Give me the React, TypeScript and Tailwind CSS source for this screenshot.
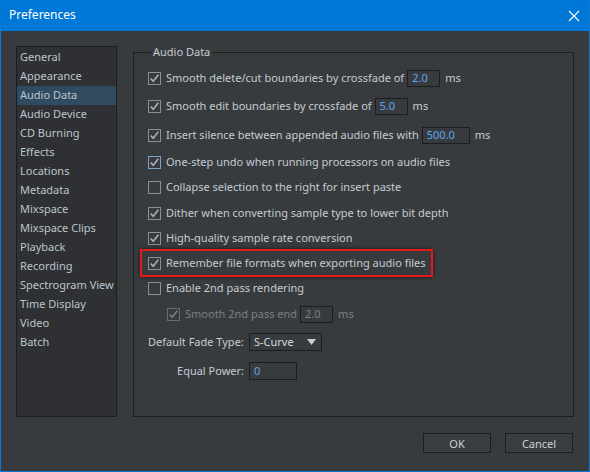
import React from "react";

const FONT = { fontFamily: '"Noto Sans", "Open Sans", sans-serif' };

const sections = [
  "General",
  "Appearance",
  "Audio Data",
  "Audio Device",
  "CD Burning",
  "Effects",
  "Locations",
  "Metadata",
  "Mixspace",
  "Mixspace Clips",
  "Playback",
  "Recording",
  "Spectrogram View",
  "Time Display",
  "Video",
  "Batch",
];

function Check({ checked, focused, disabled }: { checked: boolean; focused?: boolean; disabled?: boolean }) {
  const border = focused ? "border-[#7aa3cc]" : disabled ? "border-[#6a6e72]" : "border-[#8b8f93]";
  return (
    <span className={`w-[13px] h-[13px] shrink-0 border ${border} flex items-center justify-center`}>
      {checked && (
        <svg width="11" height="11" viewBox="0 0 11 11" aria-hidden="true">
          <path
            d="M1.8 5.6 L4.3 8.3 L9.3 1.8"
            fill="none"
            stroke={disabled ? "#7b7f83" : "#a9aeb3"}
            strokeWidth="1.6"
          />
        </svg>
      )}
    </span>
  );
}

function Field({ value, width, disabled }: { value: string; width: string; disabled?: boolean }) {
  return (
    <span
      className={`${width} h-[17px] border border-[#1c1d1f] flex items-center pl-[4px] ${
        disabled ? "text-[#7b8085]" : "text-[#5ea6ec]"
      }`}
    >
      {value}
    </span>
  );
}

function Row({
  h,
  checked,
  label,
  focused,
  children,
}: {
  h: string;
  checked: boolean;
  label: string;
  focused?: boolean;
  children?: React.ReactNode;
}) {
  return (
    <div className={`${h} flex items-center whitespace-nowrap`}>
      <Check checked={checked} focused={focused} />
      <span className="ml-[5px]">{label}</span>
      {children}
    </div>
  );
}

export default function App() {
  return (
    <div
      className="w-[590px] h-[472px] bg-[#383b3e] border border-t-0 border-[#0a78d7] flex flex-col text-[11px] text-[#c3ccd2] overflow-hidden"
      style={FONT}
    >
      {/* title bar */}
      <div className="h-[31px] -mx-px bg-[#0078d7] flex items-center justify-between pl-[9px] pr-[10px] shrink-0">
        <span className="text-white text-[12px] mb-[1px]">Preferences</span>
        <svg width="12" height="12" viewBox="0 0 12 12" aria-hidden="true">
          <path d="M1 1 L11 11 M11 1 L1 11" stroke="white" strokeWidth="1.1" />
        </svg>
      </div>

      <div className="flex-1 flex flex-col">
        <div className="flex pt-[15px] pl-[15px]">
          {/* sidebar */}
          <div className="w-[101px] h-[371px] bg-[#2e3033] border border-[#1c1d1f] text-[#bcc5cc] pt-px">
            {sections.map((s) => (
              <div
                key={s}
                className={`h-[19px] flex items-center pl-[3px] whitespace-nowrap ${
                  s === "Audio Data" ? "bg-[#304a60]" : ""
                }`}
              >
                {s}
              </div>
            ))}
          </div>

          {/* group box */}
          <div className="relative ml-[16px] mt-[6px] w-[441px] h-[365px] border border-[#1c1d1f] pl-[14px] pt-[11px]">
            <span className="absolute left-[17px] -top-[9px] px-[2px] bg-[#383b3e] leading-[16px]">
              Audio Data
            </span>

            <Row h="h-[28px]" checked label="Smooth delete/cut boundaries by crossfade of">
              <span className="ml-[3px]"><Field value="2.0" width="w-[33px]" /></span>
              <span className="ml-[5px]">ms</span>
            </Row>
            <Row h="h-[29px]" checked label="Smooth edit boundaries by crossfade of">
              <span className="ml-[3px]"><Field value="5.0" width="w-[33px]" /></span>
              <span className="ml-[5px]">ms</span>
            </Row>
            <Row h="h-[29px]" checked label="Insert silence between appended audio files with">
              <span className="ml-[3px]"><Field value="500.0" width="w-[48px]" /></span>
              <span className="ml-[5px]">ms</span>
            </Row>
            <Row h="h-[25px]" checked focused label="One-step undo when running processors on audio files" />
            <Row h="h-[25px]" checked={false} label="Collapse selection to the right for insert paste" />
            <Row h="h-[26px]" checked label="Dither when converting sample type to lower bit depth" />
            <Row h="h-[25px]" checked label="High-quality sample rate conversion" />
            <div className="h-[25px] flex items-center relative whitespace-nowrap">
              <span className="absolute -left-[8px] top-[-2px] w-[293px] h-[28px] border-2 border-[#e81818] shadow-[0_0_4px_rgba(0,0,0,0.6)]" />
              <Check checked />
              <span className="ml-[5px]">Remember file formats when exporting audio files</span>
            </div>
            <Row h="h-[25px]" checked={false} label="Enable 2nd pass rendering" />
            <div className="h-[26px] flex items-center pl-[19px] text-[#7b8085] whitespace-nowrap">
              <Check checked disabled />
              <span className="ml-[5px]">Smooth 2nd pass end</span>
              <span className="ml-[3px]"><Field value="2.0" width="w-[33px]" disabled /></span>
              <span className="ml-[5px]">ms</span>
            </div>

            <div className="h-[30px] flex items-center whitespace-nowrap">
              <span className="w-[101px]">Default Fade Type:</span>
              <span className="w-[73px] h-[18px] border border-[#1c1d1f] flex items-center justify-between pl-[4px] pr-[5px] text-[#d3d9de]">
                S-Curve
                <svg width="9" height="6" viewBox="0 0 9 6" aria-hidden="true">
                  <path d="M0 0 L9 0 L4.5 6 Z" fill="#c7ced4" />
                </svg>
              </span>
            </div>
            <div className="h-[28px] flex items-center whitespace-nowrap">
              <span className="w-[101px] text-right pr-[5px]">Equal Power:</span>
              <Field value="0" width="w-[48px] h-[18px]" />
            </div>
          </div>
        </div>

        {/* buttons */}
        <div className="flex justify-end gap-[14px] pr-[16px] pt-[16px]">
          <button className="w-[68px] h-[20px] border border-[#1c1d1f] bg-[#3a3d40] text-[#c8d0d6] text-[11px] leading-none">
            OK
          </button>
          <button className="w-[68px] h-[20px] border border-[#1c1d1f] bg-[#3a3d40] text-[#c8d0d6] text-[11px] leading-none">
            Cancel
          </button>
        </div>
      </div>
    </div>
  );
}
